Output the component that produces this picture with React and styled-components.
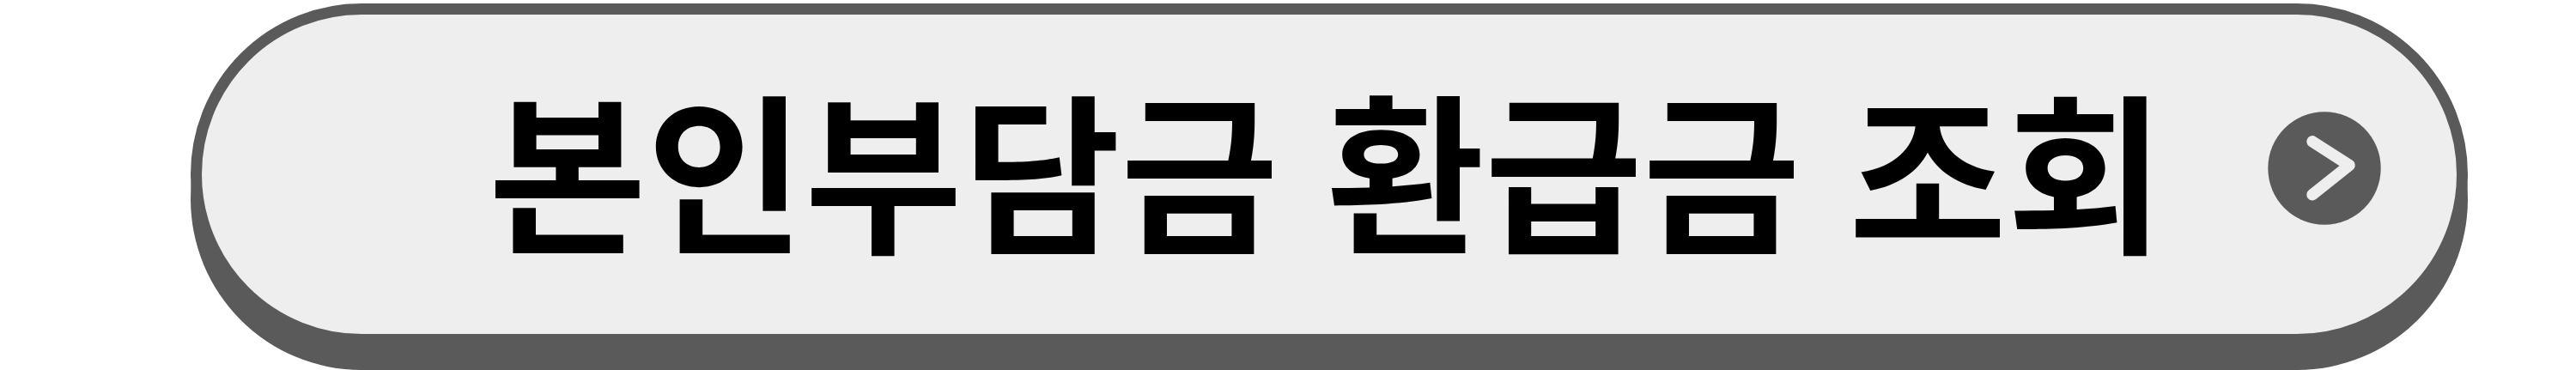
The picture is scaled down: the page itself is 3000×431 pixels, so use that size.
import styled, { createGlobalStyle } from 'styled-components';

const GlobalStyle = createGlobalStyle`
  * {
    box-sizing: border-box;
  }

  body {
    margin: 0;
    background-color: #fff;
    font-family: 'Noto Sans CJK KR', sans-serif;
  }
`;

const ButtonArea = styled.main`
  padding: 4px 4.2% 29px 7.4%;
`;

const RefundLink = styled.a`
  display: flex;
  align-items: center;
  justify-content: flex-end;
  gap: 120px;
  padding: 26px 88px 46px 40px;
  border: 13px solid #5a5a5a;
  border-radius: 200px;
  background-color: #eee;
  box-shadow: 0 29px 0 #5a5a5a;
  color: #000;
  text-decoration: none;
`;

const LinkText = styled.span`
  font-size: 200px;
  font-weight: 700;
  line-height: 300px;
  white-space: nowrap;
`;

const ArrowIcon = styled.svg`
  flex-shrink: 0;
  width: 132px;
  height: 132px;
  margin-top: 6px;
`;

function Arrow() {
  return (
    <ArrowIcon viewBox="0 0 132 132" aria-hidden="true">
      <circle cx="66" cy="66" r="65.7" fill="#5a5a5a" />
      <path
        d="M52 34.8 L95 62.5 L52 96.8"
        fill="none"
        stroke="#eee"
        strokeWidth="13.4"
        strokeLinecap="round"
        strokeLinejoin="round"
      />
    </ArrowIcon>
  );
}

function App() {
  return (
    <>
      <GlobalStyle />
      <ButtonArea>
        <RefundLink href="#refund" lang="ko">
          <LinkText>본인부담금 환급금 조회</LinkText>
          <Arrow />
        </RefundLink>
      </ButtonArea>
    </>
  );
}

export default App;
